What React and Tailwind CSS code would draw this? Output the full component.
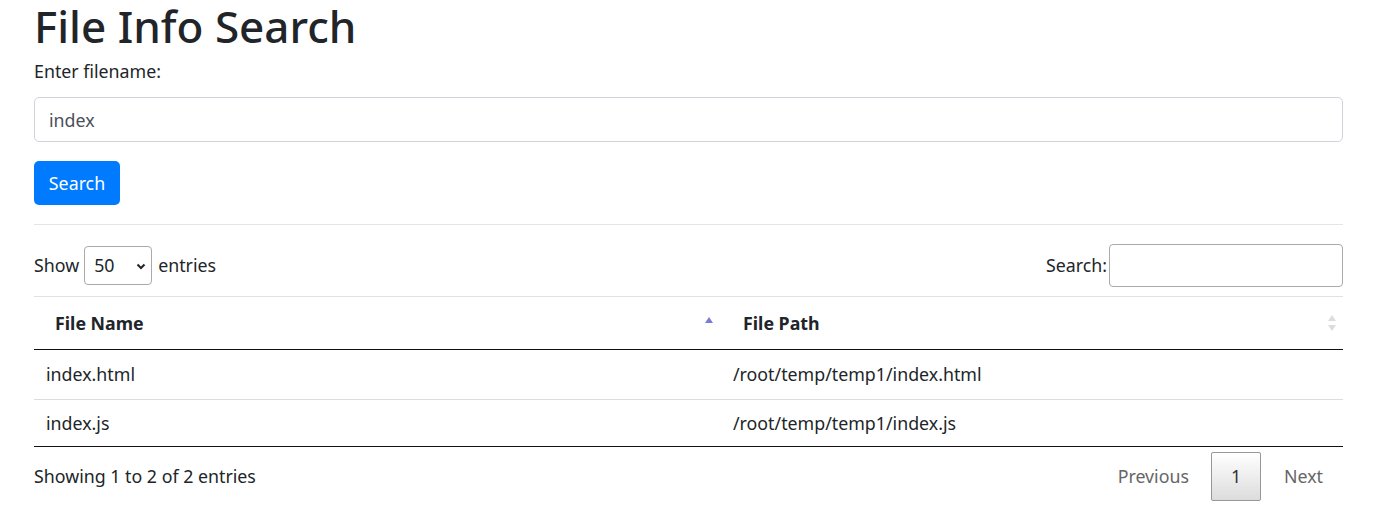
import React, { useState } from "react";

const rows = [
  { name: "index.html", path: "/root/temp/temp1/index.html" },
  { name: "index.js", path: "/root/temp/temp1/index.js" },
];

const SortUp = () => (
  <svg width="10" height="10" viewBox="0 0 10 10" className="absolute right-[8px] top-[18px]">
    <path d="M1 8 L5 2 L9 8 Z" fill="#7b7bd6" />
  </svg>
);

const SortBoth = () => (
  <svg width="10" height="18" viewBox="0 0 10 18" className="absolute right-[6px] top-[17px]">
    <path d="M1 7 L5 1 L9 7 Z" fill="#dcdcdc" />
    <path d="M1 11 L5 17 L9 11 Z" fill="#dcdcdc" />
  </svg>
);

export default function App() {
  const [filename, setFilename] = useState("index");
  const [filter, setFilter] = useState("");

  return (
    <div className="bg-white text-[#212529] px-[34px] font-['Noto_Sans',sans-serif] text-[17.8px] w-[1377px]">
      <h1 className="text-[44px] leading-[50px] font-medium pt-[1px]">File Info Search</h1>

      <label className="block leading-[28px] mt-[6px]">Enter filename:</label>
      <input
        value={filename}
        onChange={(e) => setFilename(e.target.value)}
        className="block w-full mt-[12px] h-[45px] px-[14px] border border-[#ced4da] rounded-[5px] text-[#495057] outline-none"
      />
      <button className="mt-[19px] h-[44px] w-[86px] bg-[#007bff] text-white rounded-[5px]">Search</button>

      <hr className="mt-[19px] border-t border-[#e5e5e5]" />

      <div className="flex items-center justify-between mt-[19px] h-[43px]">
        <div className="flex items-center">
          <span>Show</span>
          <div className="relative ml-[5px] mr-[6px]">
            <select className="appearance-none w-[68px] h-[39px] border border-[#aaa] rounded-[4px] pl-[9px] bg-white outline-none">
              <option>50</option>
            </select>
            <svg width="12" height="12" viewBox="0 0 12 12" className="absolute right-[5px] top-[14px] pointer-events-none">
              <path d="M2.5 4.5 L6 8 L9.5 4.5" stroke="#212529" strokeWidth="2" fill="none" />
            </svg>
          </div>
          <span>entries</span>
        </div>
        <div className="flex items-center">
          <span className="mr-[2px]">Search:</span>
          <input
            value={filter}
            onChange={(e) => setFilter(e.target.value)}
            className="w-[234px] h-[43px] border border-[#aaa] rounded-[4px] px-[6px] outline-none"
          />
        </div>
      </div>

      <table className="w-full mt-[9px] border-collapse">
        <thead>
          <tr className="border-t border-[#dee2e6] border-b border-b-[#111]">
            <th className="relative text-left font-bold w-[688px] h-[53px] pl-[21px]">
              File Name
              <SortUp />
            </th>
            <th className="relative text-left font-bold h-[53px] pl-[21px]">
              File Path
              <SortBoth />
            </th>
          </tr>
        </thead>
        <tbody>
          {rows.map((r, i) => (
            <tr key={r.name} className={i === 0 ? "border-b border-[#ddd]" : "border-b border-[#111]"}>
              <td className={`pl-[12px] ${i === 0 ? "h-[50px]" : "h-[47px]"}`}>{r.name}</td>
              <td className="pl-[11px]">{r.path}</td>
            </tr>
          ))}
        </tbody>
      </table>

      <div className="flex items-center justify-between mt-[5px]">
        <div>Showing 1 to 2 of 2 entries</div>
        <div className="flex items-center mr-[20px]">
          <span className="text-[#666] mr-[22px]">Previous</span>
          <span className="w-[50px] h-[49px] flex items-center justify-center border border-[#979797] rounded-[2px] bg-gradient-to-b from-white to-[#dcdcdc] text-[#333]">
            1
          </span>
          <span className="text-[#666] ml-[23px]">Next</span>
        </div>
      </div>
    </div>
  );
}
